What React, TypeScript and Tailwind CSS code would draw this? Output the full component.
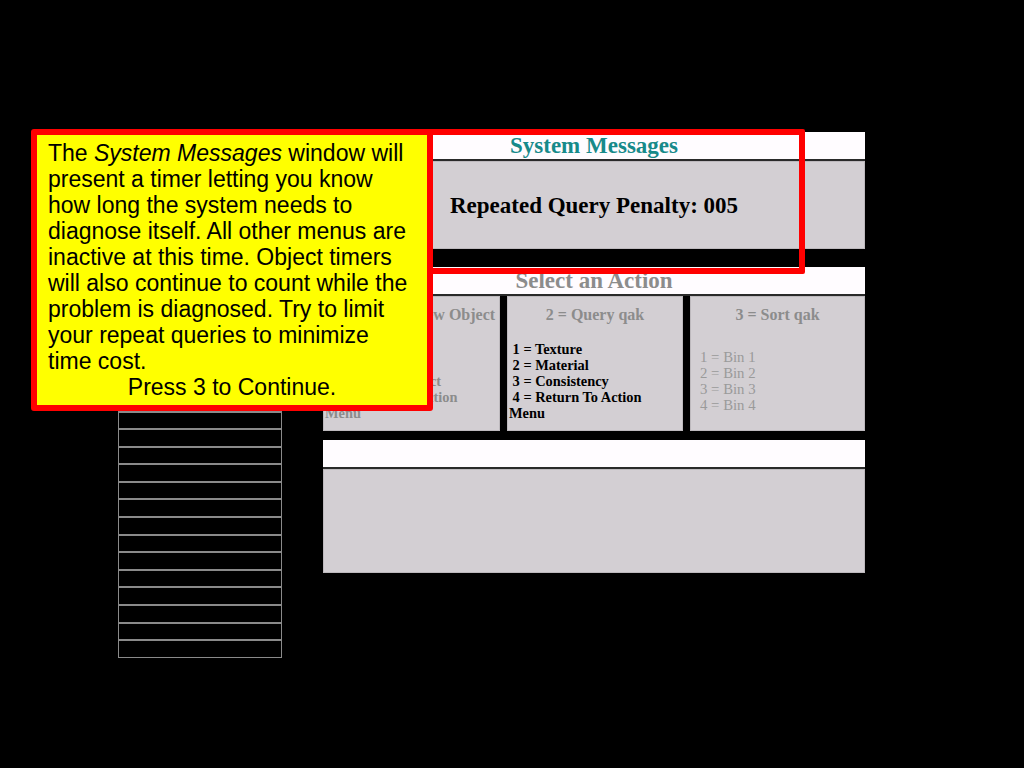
import React from "react";

const serif = "font-['Liberation_Serif','Times_New_Roman',serif]";

function ListRows() {
  return (
    <div className="mt-[130px] ml-[118px] w-[164px] flex flex-col">
      {Array.from({ length: 30 }).map((_, i) => (
        <div key={i} className="h-[17.6px] border border-[#8a8a8a] bg-black" />
      ))}
    </div>
  );
}

function Column({ title, children, top }: { title: string; children: React.ReactNode; top: string }) {
  return (
    <div className={`h-[135px] bg-[#d3cfd3] border border-[#bdb9bd] ${serif}`}>
      <div className="pt-[8px] text-center text-[16px] font-bold leading-[20px] text-[#8c8c8c] whitespace-nowrap">{title}</div>
      <div className={top}>{children}</div>
    </div>
  );
}

export default function App() {
  return (
    <div className="relative w-[1024px] h-[768px] bg-black overflow-hidden">
      <div className="flex items-start">
        <ListRows />

        {/* Right side panels */}
        <div className={`ml-[41px] mt-[132px] w-[542px] flex flex-col ${serif}`}>
          <div className="h-[29px] bg-[#fffcff] border-b-2 border-[#2a2a2a] text-center text-[23px] font-bold leading-[27px] text-[#178a8a]">
            System Messages
          </div>
          <div className="h-[88px] pt-[3px] bg-[#d3cfd3] border border-[#bdb9bd] flex items-center justify-center text-[23px] font-bold text-black">
            Repeated Query Penalty: 005
          </div>

          <div className="mt-[18px] h-[29px] bg-[#fffcff] border-b-2 border-[#2a2a2a] text-center text-[23px] font-bold leading-[27px] text-[#8c8c8c]">
            Select an Action
          </div>
          <div className="grid grid-cols-[177px_176px_175px] gap-x-[7px]">
            <Column title="1 = Retrieve New Object" top="pt-[16px] pl-[1px] text-[14.4px] font-bold leading-[16px] text-[#8c8c8c]">
              <div>&nbsp;1 = Rotate Left</div>
              <div>&nbsp;2 = Rotate Right</div>
              <div>&nbsp;3 = Inspect Object</div>
              <div>&nbsp;4 = Return To Action</div>
              <div>Menu</div>
            </Column>
            <Column title="2 = Query qak" top="pt-[16px] pl-[1px] text-[14.4px] font-bold leading-[16px] text-black">
              <div>&nbsp;1 = Texture</div>
              <div>&nbsp;2 = Material</div>
              <div>&nbsp;3 = Consistency</div>
              <div>&nbsp;4 = Return To Action</div>
              <div>Menu</div>
            </Column>
            <Column title="3 = Sort qak" top="pt-[24px] pl-[9px] text-[14.8px] leading-[16px] text-[#9a9a9a]">
              <div>1 = Bin 1</div>
              <div>2 = Bin 2</div>
              <div>3 = Bin 3</div>
              <div>4 = Bin 4</div>
            </Column>
          </div>

          <div className="mt-[9px] h-[29px] bg-[#fffcff] border-b-2 border-[#2a2a2a]" />
          <div className="h-[104px] bg-[#d3cfd3] border border-[#bdb9bd]" />
        </div>
      </div>

      {/* Highlight around the System Messages window */}
      <div className="absolute left-[427px] top-[129px] w-[378px] h-[145px] border-[6px] border-[#ff0000] rounded-[2px]" />

      {/* Tutorial callout */}
      <div className="absolute left-[31px] top-[129px] w-[402px] h-[282px] bg-[#ffff00] border-[6px] border-[#ff0000] rounded-[3px] pl-[11px] pr-[12px] pt-[5px] font-['Liberation_Sans',Arial,sans-serif] text-[23px] leading-[26px] text-black">
        <p>
          The <i>System Messages</i> window will present a timer letting you know how long the system needs to diagnose itself. All other menus are inactive at this time. Object timers will also continue to count while the problem is diagnosed. Try to limit your repeat queries to minimize time cost.
        </p>
        <p className="text-center -ml-[11px] -mr-[12px]">Press 3 to Continue.</p>
      </div>
    </div>
  );
}
